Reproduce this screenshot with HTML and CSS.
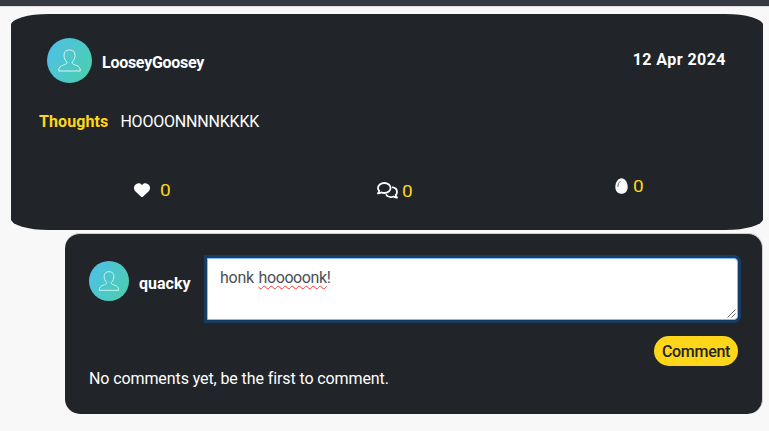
FILE: index.html
```html
<!DOCTYPE html>
<html lang="en">
<head>
<meta charset="utf-8">
<title>Post</title>
<link rel="stylesheet" href="styles.css">
</head>
<body>
<svg width="0" height="0" class="defs" aria-hidden="true">
  <defs>
    <linearGradient id="tint" x1="0" y1="0.2" x2="1" y2="0.8"><stop offset="0" stop-color="#4fc0e6"/><stop offset="1" stop-color="#4bcfae"/></linearGradient>
    <symbol id="person" viewBox="0 0 45 45">
      <circle cx="22.5" cy="22.5" r="22.5" fill="url(#tint)"/>
      <path d="M20 24.2C18 22.3 17 20 17 17.3C17 13.8 19 12 22.5 12S28 13.8 28 17.3C28 20 27 22.3 25 24.2C25 26.3 27 26.5 29 27.2C32 28.2 33.3 29.8 33.3 33H11.7C11.7 29.8 13 28.2 16 27.2C18 26.5 20 26.3 20 24.2Z" fill="none" stroke="#d7f5f3" stroke-width="1"/>
    </symbol>
  </defs>
</svg>
<header class="navbar"></header>
<main>
  <article class="post">
    <div class="post-head">
      <svg class="avatar"><use href="#person"/></svg>
      <strong class="name">LooseyGoosey</strong>
      <strong class="date">12 Apr 2024</strong>
    </div>
    <div class="post-body"><strong class="label">Thoughts</strong><span class="message">HOOOONNNNKKKK</span></div>
    <div class="stats">
      <div class="stat likes">
        <svg width="16" height="16" viewBox="0 0 512 512"><path fill="#fff" d="M47.6 300.4L228.3 469.1c7.5 7 17.4 10.9 27.7 10.9s20.200-3.900 27.700-10.900L464.400 300.400c30.400-28.300 47.600-68 47.600-109.500v-5.800c0-69.900-50.500-129.500-119.400-141C347 36.500 300.600 51.400 268 84L256 96 244 84c-32.600-32.600-79-47.500-124.600-39.900C50.500 55.600 0 115.200 0 185.100v5.800c0 41.500 17.200 81.200 47.600 109.500z"/></svg>
        <span>0</span>
      </div>
      <div class="stat replies">
        <svg width="21" height="17" viewBox="0 0 21 17" fill="none" stroke="#fff" stroke-width="1.8" stroke-linejoin="round"><path d="M7.300 1C10.900 1 13.600 3.200 13.600 6S10.900 11 7.300 11C6.200 11 5.200 10.800 4.300 10.400C3.200 11.100 2.100 11.400 1 11.400C1.700 10.600 2.100 9.700 2.200 8.900C1.400 8.100 1 7.100 1 6C1 3.200 3.700 1 7.300 1Z"/><path d="M15.100 5.100C18 5.500 20 7.500 20 10C20 11.100 19.600 12.100 18.800 12.900C18.900 13.800 19.400 14.800 20 15.700C18.700 15.600 17.600 15.200 16.700 14.500C13.600 15.600 10.300 14.700 8.900 12.400"/></svg>
        <span>0</span>
      </div>
      <div class="stat eggs">
        <svg width="13" height="16" viewBox="0 0 13 16"><path fill="#fafafa" d="M6.500 .2C10 .2 12.700 4.500 12.700 9C12.700 13.200 10 15.800 6.500 15.800S.3 13.200 .3 9C.3 4.500 3 .2 6.500 .2Z"/><path d="M2.800 8.800C3 6.200 3.900 4.400 5.300 3.300" fill="none" stroke="#555969" stroke-width=".9"/></svg>
        <span>0</span>
      </div>
    </div>
  </article>
  <section class="comments">
    <form class="compose">
      <svg class="avatar small"><use href="#person"/></svg>
      <strong class="name">quacky</strong>
      <div class="field"><span class="typed">honk <span class="misspelt">hooooonk</span>!</span>
        <svg class="grip" width="9" height="9" viewBox="0 0 9 9" stroke="#555" stroke-width=".9"><path d="M.5 8.500L8.500 .5M4.500 8.500L8.500 4.500"/></svg>
      </div>
    </form>
    <div class="actions"><button type="button">Comment</button></div>
    <p class="empty"><span>No comments yet, be the first to comment.</span></p>
  </section>
</main>
</body>
</html>
```
FILE: styles.css
```css
* { box-sizing: border-box; }
body { margin: 0; height: 431px; overflow: hidden; background: #f8f8f8; color: #fff; font: 16px/24px Roboto, "Liberation Sans", sans-serif; }
.defs { position: absolute; }
.navbar { height: 7px; background: #373943; border-bottom: 1px solid #dedbe1; }
main { padding: 7px 6px 0 11px; }
.post { height: 216px; padding: 24px 37px 0 28px; background: #212529; border-radius: 5%; }
.post-head { display: flex; align-items: flex-start; padding-left: 8px; height: 72px; }
.avatar { width: 45px; height: 45px; flex: none; }
.name { margin: 13px 0 0 10px; }
.date { margin: 10px 0 0 auto; letter-spacing: .45px; }
.post-head .name { letter-spacing: -.27px; }
.post-body { display: flex; gap: 12px; height: 68px; }
.label { color: #ffd61a; letter-spacing: .1px; }
.message { letter-spacing: -.2px; }
.stats { display: grid; grid-template-columns: 243px 238px 1fr; padding-left: 95px; }
.stat { display: flex; align-items: flex-start; color: #ffd61a; font-size: 17px; }
.stat span { transform: scaleX(1.12); transform-origin: left; }
.likes svg { margin: 4px 10px 0 0; }
.replies svg { margin: 4px 4px 0 0; }
.replies span { margin-top: 1px; }
.eggs { margin-top: -4px; }
.eggs svg { margin: 4px 5px 0 0; }
.comments { width: 698px; height: 181px; margin: 3px 0 0 54px; padding: 24px 24px 0; background: #212529; border: 1px solid #cfcfd3; border-width: 1px 1px 0 0; border-radius: 15px; }
.compose { display: flex; align-items: flex-start; height: 63px; }
.avatar.small { width: 40px; height: 40px; margin-top: 3px; }
.compose .name { width: 52px; margin: 14px 0 0 10px; }
.field { position: relative; width: 531px; flex: none; height: 62px; margin: 0 0 0 16px; padding: 7px 12px; background: #fff; color: #495057; border: 1px solid #80bdff; border-radius: 0 4px 4px 0; box-shadow: 0 0 0 3px #183c64; }
.typed { letter-spacing: -.27px; word-spacing: 1px; }
.misspelt { letter-spacing: -.4px; text-decoration: underline wavy #f33; text-decoration-thickness: 1px; text-underline-offset: 2px; text-decoration-skip-ink: none; }
.grip { position: absolute; right: 1px; bottom: 1px; }
.actions { display: flex; justify-content: flex-end; margin-top: 15px; }
button { width: 84px; height: 30px; padding: 2px 0 0; border: 0; border-radius: 15px; background: #ffd61a; color: #212529; font: 500 16px/28px Roboto, sans-serif; letter-spacing: -.3px; }
.empty { margin: 1px 0 0; letter-spacing: -.1px; }
```
